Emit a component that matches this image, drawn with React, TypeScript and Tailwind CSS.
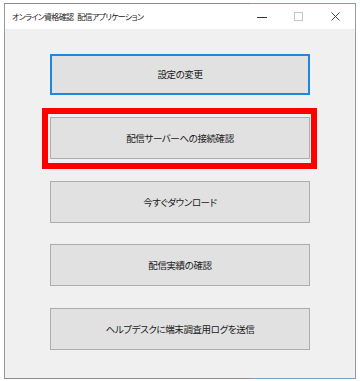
import React from 'react';

const buttons = [
  { label: '設定の変更', mt: 'mt-[25px]', focused: true },
  { label: '配信サーバーへの接続確認', mt: 'mt-[22px]', marked: true },
  { label: '今すぐダウンロード', mt: 'mt-[22px]' },
  { label: '配信実績の確認', mt: 'mt-[21px]' },
  { label: 'ヘルプデスクに端末調査用ログを送信', mt: 'mt-[22px]' },
];

function Edge() {
  return (
    <div className="flex h-px">
      <div className="w-[246px] bg-[#8c8c8c]" />
      <div className="flex-1 bg-[#7d9cc4]" />
    </div>
  );
}

export default function App() {
  return (
    <div className="w-[360px] h-[381px] bg-white pt-[3px] pl-[4px] font-['Noto_Sans_CJK_JP','Noto_Sans',sans-serif] [font-feature-settings:'palt']">
      <div className="w-[352px] h-[376px] flex flex-col">
        <Edge />
        <div className="flex flex-1 flex-col border-x border-x-[#9a9a9a]">
          {/* title bar */}
          <div className="flex items-center h-[25px] bg-white">
            <span className="flex gap-[4px] pl-[7px] text-[8px] tracking-[-0.7px] text-[#222] leading-none">
              <span>オンライン資格確認</span>
              <span>配信アプリケーション</span>
            </span>
            <div className="ml-auto flex pr-[1px]">
              <div className="w-[37px] h-[25px] flex items-center justify-center">
                <svg width="10" height="10" viewBox="0 0 10 10">
                  <line x1="0" y1="5.5" x2="10" y2="5.5" stroke="#333" strokeWidth="1" />
                </svg>
              </div>
              <div className="w-[37px] h-[25px] flex items-center justify-center">
                <svg width="9" height="9" viewBox="0 0 9 9">
                  <rect x="0.5" y="0.5" width="8" height="8" fill="none" stroke="#c4c4c4" strokeWidth="1" />
                </svg>
              </div>
              <div className="w-[37px] h-[25px] flex items-center justify-center">
                <svg width="9" height="9" viewBox="0 0 9 9">
                  <path d="M0.5 0.5 L8.5 8.5 M8.5 0.5 L0.5 8.5" stroke="#333" strokeWidth="0.9" />
                </svg>
              </div>
            </div>
          </div>

          {/* content */}
          <div className="flex-1 bg-[#f0f0f0] pl-[45px] flex flex-col">
            {buttons.map((b, i) => (
              <div key={i} className={`relative w-[260px] ${b.mt}`}>
                <div
                  className={
                    b.focused
                      ? 'h-[41px] flex items-center justify-center bg-[#e1e1e1] border-2 border-[#1e86dc] text-[9.5px] tracking-[-0.4px] text-[#1a1a1a]'
                      : 'h-[42px] flex items-center justify-center bg-[#e1e1e1] border border-[#adadad] text-[9.5px] tracking-[-0.4px] text-[#1a1a1a]'
                  }
                >
                  {b.label}
                </div>
                {b.marked && (
                  <div className="absolute -top-[9px] -bottom-[10px] -left-[8px] -right-[7px] border-[6px] border-[#ff0000]" />
                )}
              </div>
            ))}
          </div>
        </div>
        <Edge />
      </div>
    </div>
  );
}
